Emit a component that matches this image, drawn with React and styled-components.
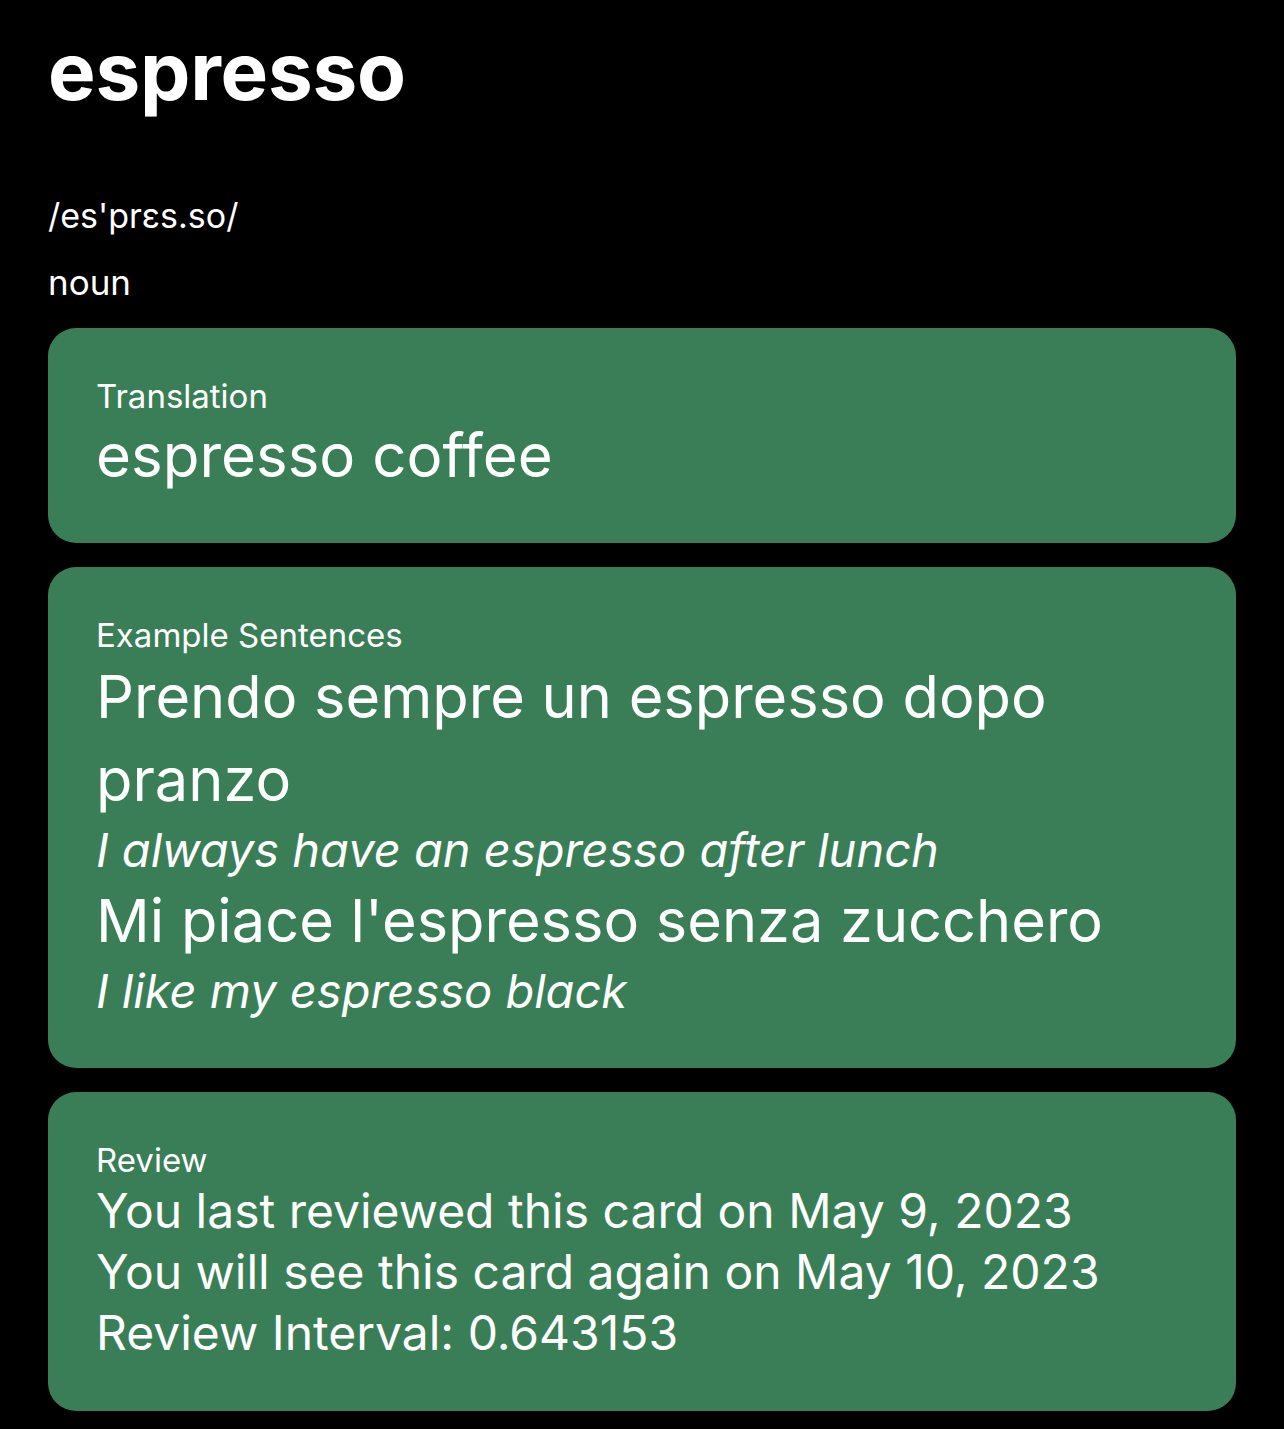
import React from "react";
import styled, { createGlobalStyle } from "styled-components";

const Global = createGlobalStyle`
  html, body { margin: 0; padding: 0; background: #000; }
  body { font-family: Inter, "Noto Sans", sans-serif; color: #fff; }
`;

const Page = styled.div`
  background: #000;
  min-height: 1429px;
  padding: 21px 48px 20px;
  box-sizing: border-box;
`;

const Title = styled.h1`
  margin: 0;
  font-family: Inter, sans-serif;
  font-weight: 700;
  font-size: 80px;
  line-height: 100px;
  letter-spacing: -0.25px;
`;

const Pron = styled.div`
  margin-top: 75px;
  font-size: 34px;
  line-height: 40px;
`;

const Pos = styled.div`
  margin-top: 26px;
  font-size: 35px;
  line-height: 40px;
`;

const Cards = styled.div`
  margin-top: 26px;
  display: flex;
  flex-direction: column;
  gap: 24px;
`;

const Card = styled.section`
  background: #3a7e57;
  border-radius: 28px;
  padding: 48px 48px;
  display: flex;
  flex-direction: column;
`;

const Label = styled.div`
  font-size: 33px;
  line-height: 40px;
`;

const Big = styled.div`
  font-size: ${(p) => p.$size}px;
  line-height: ${(p) => p.$lh}px;
  font-style: ${(p) => (p.$italic ? "italic" : "normal")};
`;

export default function App() {
  return (
    <>
      <Global />
      <Page>
        <Title>espresso</Title>
        <Pron>/es'prɛs.so/</Pron>
        <Pos>noun</Pos>
        <Cards>
          <Card>
            <Label>Translation</Label>
            <Big $size={60} $lh={79}>espresso coffee</Big>
          </Card>
          <Card>
            <Label>Example Sentences</Label>
            <Big $size={59.5} $lh={83}>Prendo sempre un espresso dopo pranzo</Big>
            <Big $size={47} $lh={58} $italic>I always have an espresso after lunch</Big>
            <Big $size={59.5} $lh={83}>Mi piace l'espresso senza zucchero</Big>
            <Big $size={47} $lh={58} $italic>I like my espresso black</Big>
          </Card>
          <Card>
            <Label>Review</Label>
            <Big $size={48} $lh={61}>You last reviewed this card on May 9, 2023</Big>
            <Big $size={48} $lh={61}>You will see this card again on May 10, 2023</Big>
            <Big $size={48} $lh={61}>Review Interval: 0.643153</Big>
          </Card>
        </Cards>
      </Page>
    </>
  );
}
